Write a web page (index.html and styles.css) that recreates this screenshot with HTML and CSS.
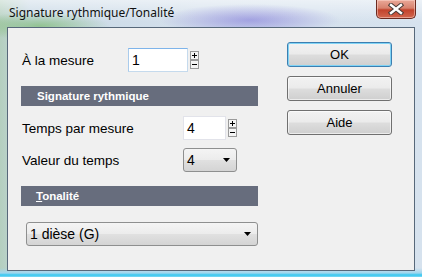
FILE: index.html
```html
<!DOCTYPE html>
<html>
    <head>
        <meta charset="utf-8">
        <title>Signature rythmique/Tonalité</title>
        <link rel="stylesheet" href="styles.css">
    </head>
    <body>
        <div class="window">
            <div class="titlebar">
                <span class="title">Signature rythmique/Tonalité</span>
                <span class="close-btn">
                    <svg width="16" height="12" viewBox="0 0 16 12">
                        <path d="M3 2 L13 10 M13 2 L3 10" stroke="#4a3a36" stroke-width="4.4" stroke-linecap="square" fill="none"/>
                        <path d="M3 2 L13 10 M13 2 L3 10" stroke="#ffffff" stroke-width="2.4" stroke-linecap="square" fill="none"/>
                    </svg>
                </span>
            </div>
            <div class="client">
                <div class="form">
                    <div class="row row-measure">
                        <span class="label label-measure">À la mesure</span>
                        <div class="field field-focused field-measure">1</div>
                        <span class="spin">
                            <svg width="9" height="18" viewBox="0 0 9 18">
                                <rect x="0.5" y="0.5" width="8" height="8" fill="#f4f4f4" stroke="#9a9a9a"/>
                                <path d="M2 4.5 H7 M4.5 2 V7" stroke="#000" stroke-width="1"/>
                                <rect x="0.5" y="9.5" width="8" height="8" fill="#f4f4f4" stroke="#9a9a9a"/>
                                <path d="M2 13.5 H7" stroke="#000" stroke-width="1"/>
                            </svg>
                        </span>
                    </div>

                    <div class="group-header">Signature rythmique</div>

                    <div class="row row-beats">
                        <span class="label label-wide">Temps par mesure</span>
                        <div class="field field-beats">4</div>
                        <span class="spin">
                            <svg width="9" height="18" viewBox="0 0 9 18">
                                <rect x="0.5" y="0.5" width="8" height="8" fill="#f4f4f4" stroke="#9a9a9a"/>
                                <path d="M2 4.5 H7 M4.5 2 V7" stroke="#000" stroke-width="1"/>
                                <rect x="0.5" y="9.5" width="8" height="8" fill="#f4f4f4" stroke="#9a9a9a"/>
                                <path d="M2 13.5 H7" stroke="#000" stroke-width="1"/>
                            </svg>
                        </span>
                    </div>

                    <div class="row row-value">
                        <span class="label label-wide">Valeur du temps</span>
                        <div class="combo combo-small">
                            <span class="combo-text">4</span>
                            <svg class="combo-arrow" width="7" height="4" viewBox="0 0 7 4"><path d="M0 0 H7 L3.5 4 Z" fill="#000"/></svg>
                        </div>
                    </div>

                    <div class="group-header group-key"><u>T</u>onalité</div>

                    <div class="combo combo-key">
                        <span class="combo-text">1 dièse (G)</span>
                        <svg class="combo-arrow" width="7" height="4" viewBox="0 0 7 4"><path d="M0 0 H7 L3.5 4 Z" fill="#000"/></svg>
                    </div>
                </div>
                <div class="buttons">
                    <div class="btn btn-default">OK</div>
                    <div class="btn">Annuler</div>
                    <div class="btn">Aide</div>
                </div>
            </div>
        </div>
    </body>
</html>
```

FILE: styles.css
```css
/* Overall */

* {
    box-sizing: border-box;
}

html, body {
    padding: 0;
    margin: 0;
}

body {
    width: 422px;
    height: 277px;
    overflow: hidden;
    font-family: 'Liberation Sans', Arial, sans-serif;
    font-size: 13px;
    color: #000;
}

/* Window frame */

.window {
    width: 422px;
    height: 277px;
    display: flex;
    flex-direction: column;
    background:
        linear-gradient(to bottom, transparent 268px, #9fd6ee 273px, #35c8f0 275px, #7fd8f4 277px),
        radial-gradient(ellipse 90px 16px at 250px 20px, rgba(120, 110, 215, 0.55), transparent),
        radial-gradient(ellipse 70px 14px at 40px 26px, rgba(110, 180, 90, 0.6), transparent),
        linear-gradient(to bottom, rgba(255, 255, 255, 0.55), transparent 22px),
        linear-gradient(to right, #b4cfbf 0, #c9d9e6 30px, #d4e0ec 200px, #d6e2ee 422px);
}

.titlebar {
    height: 27px;
    display: flex;
    align-items: flex-start;
    padding: 0 6px 0 9px;
}

.title {
    font-family: 'Noto Sans', 'Liberation Sans', sans-serif;
    font-size: 12px;
    line-height: 16px;
    padding-top: 5px;
    color: #111;
}

.close-btn {
    margin-left: auto;
    width: 40px;
    height: 19px;
    display: flex;
    align-items: center;
    justify-content: center;
    border: 1px solid #6b2a20;
    border-top: none;
    border-radius: 0 0 5px 5px;
    background: linear-gradient(to bottom, #eaa898 0, #d7826e 45%, #c2432c 55%, #d2674f 100%);
    box-shadow: inset 0 0 0 1px rgba(255, 220, 210, 0.5);
}

.client {
    margin: 0 7px 0 7px;
    height: 244px;
    display: flex;
    border: 1px solid #57687a;
    background: #f0f0f0;
}

/* Form column */

.form {
    width: 250px;
    padding: 0 0 0 13px;
}

.row {
    display: flex;
    align-items: center;
    height: 24px;
}

.row-measure {
    margin-top: 20px;
}

.row-beats {
    margin-top: 10px;
}

.row-value {
    margin-top: 8px;
}

.label {
    padding-left: 1px;
    font-size: 13.5px;
}

.label-measure {
    width: 107px;
}

.label-wide {
    width: 162px;
}

.field {
    height: 24px;
    padding: 0 3px;
    font-size: 14px;
    line-height: 22px;
    background: #fff;
    border: 1px solid #e2e3ea;
}

.field-focused {
    border-color: #7eb4ea #c5daed #c5daed #a9cbec;
}

.field-measure {
    width: 60px;
}

.field-beats {
    width: 43px;
}

.spin {
    margin-left: 2px;
    display: flex;
}

.group-header {
    margin-top: 14px;
    height: 20px;
    width: 237px;
    padding-left: 16px;
    background: #676d7d;
    color: #fff;
    font-weight: bold;
    font-size: 11.5px;
    line-height: 20px;
}

.group-key {
    padding-left: 15px;
}

.combo {
    height: 24px;
    display: flex;
    align-items: center;
    padding: 0 6px 0 3px;
    border: 1px solid #8e8f8f;
    border-radius: 3px;
    background: linear-gradient(to bottom, #f4f4f4 0, #ececec 48%, #e0e0e0 52%, #d4d4d4 100%);
    font-size: 14px;
}

.combo-text {
    flex: 1;
}

.combo-small {
    width: 54px;
}

.combo-key {
    margin: 16px 0 0 5px;
    width: 232px;
}

/* Buttons column */

.buttons {
    margin: 14px 0 0 29px;
    display: flex;
    flex-direction: column;
    gap: 9px;
}

.btn {
    width: 105px;
    height: 25px;
    line-height: 23px;
    text-align: center;
    border: 1px solid #707070;
    border-radius: 3px;
    background: linear-gradient(to bottom, #f2f2f2 0, #ebebeb 48%, #dddddd 52%, #cfcfcf 100%);
    box-shadow: inset 0 0 0 1px rgba(255, 255, 255, 0.6);
}

.btn-default {
    border-color: #3c7fb1;
    box-shadow: inset 0 0 0 1px #7fd3f5;
}
```
